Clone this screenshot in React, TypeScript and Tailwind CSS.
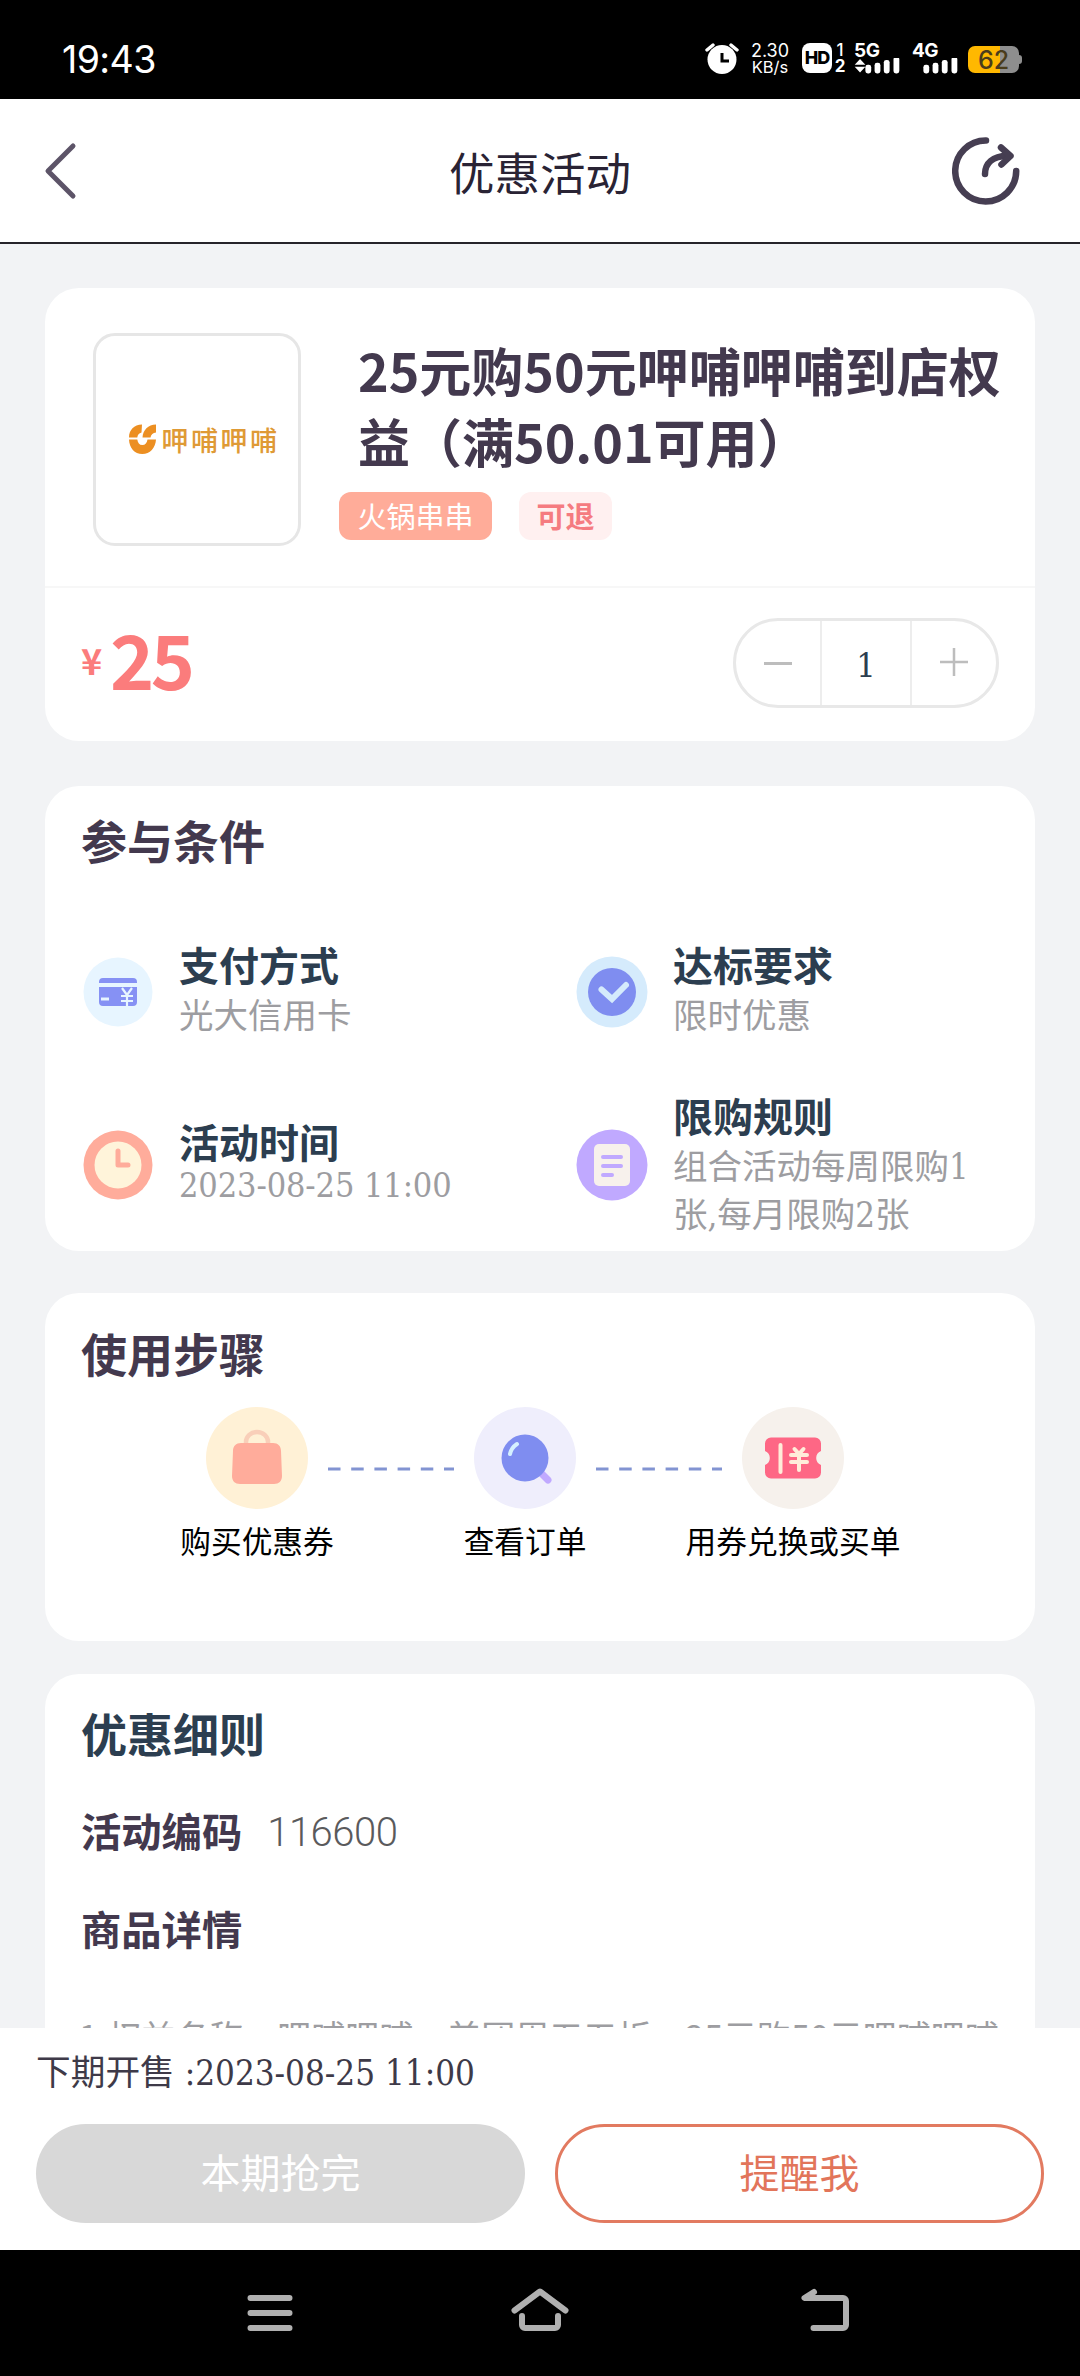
import React from 'react';

const conditions = [
  { id: 1, icon: 'card', title: '支付方式', lines: ['光大信用卡'], textClass: 'pb-[7px]' },
  { id: 2, icon: 'check', title: '达标要求', lines: ['限时优惠'], textClass: 'pb-[7px]' },
  { id: 3, icon: 'clock', title: '活动时间', lines: ['2023-08-25 11:00'], textClass: 'pb-[9px]', compact: true },
  { id: 4, icon: 'rules', title: '限购规则', lines: ['组合活动每周限购1', '张,每月限购2张'], textClass: 'pb-[4px]' },
];

const SERIF = "font-['DejaVu_Serif_Condensed','Noto_Sans_CJK_SC',serif]";

const AlarmIcon = () => (
  <svg width="34" height="32" viewBox="0 0 34 32" fill="none">
    <circle cx="17" cy="16.5" r="14.5" fill="#fff" />
    <path d="M2 7l6-5M32 7l-6-5" stroke="#fff" strokeWidth="3.4" strokeLinecap="round" />
    <path d="M17 10v8h7" stroke="#000" strokeWidth="3" />
  </svg>
);

const Signal = ({ label, arrows }: { label: string; arrows?: boolean }) => (
  <div className="flex h-[32px] w-[47px] flex-col">
    <span className="h-[16px] text-[19px] leading-[15px] font-bold tracking-[-0.5px]">{label}</span>
    <svg width="47" height="17" viewBox="0 0 47 17" fill="#fff">
      {arrows && <path d="M0 7l5.500-6 5.500 6zM0 9h11l-5.500 6z" />}
      <rect x="11" y="7" width="6" height="9" rx="2.500" />
      <rect x="20.500" y="5" width="6" height="11" rx="2.500" />
      <rect x="30" y="2" width="6" height="14" rx="2.500" />
      <rect x="40" y="-1" width="6" height="17" rx="2.500" />
    </svg>
  </div>
);

const StatusBar = () => (
  <div className="flex h-[99px] shrink-0 items-center bg-black pt-[18px] pl-[62px] text-white">
    <span className="w-[643px] pt-[4px] font-['Inter',sans-serif] text-[37.500px] tracking-[-0.6px]">19:43</span>
    <div className="flex h-[32px] items-start font-['Inter',sans-serif]">
      <AlarmIcon />
      <div className="ml-[11px] flex w-[40px] flex-col items-center text-[18px] leading-[16px]">
        <span>2.30</span>
        <span className="text-[16.500px]">KB/s</span>
      </div>
      <div className="ml-[12px] flex h-[30px] w-[30px] items-center justify-center rounded-[8px] bg-white text-[18px] font-extrabold tracking-[-1px] text-black">
        HD
      </div>
      <div className="ml-[2px] flex w-[12px] flex-col text-center text-[17px] leading-[16px] font-bold">
        <span className="leading-[14px] font-medium">1</span>
        <span className="leading-[18px]">2</span>
      </div>
      <div className="ml-[8px]">
        <Signal label="5G" arrows />
      </div>
      <div className="ml-[11px]">
        <Signal label="4G" />
      </div>
      <div className="ml-[9px] flex items-center pt-[3px]">
        <div className="flex h-[27px] w-[51px] items-center justify-center rounded-[7px] bg-linear-to-r from-[#ffb800] from-63% to-[#8e8e8e] to-63%">
          <span className="pt-[3px] text-[25px] leading-none font-medium text-[#4a3c1c]">62</span>
        </div>
        <div className="h-[9px] w-[3px] rounded-r-[3px] bg-[#8e8e8e]" />
      </div>
    </div>
  </div>
);

const Header = () => (
  <div className="flex h-[145px] shrink-0 items-center justify-between border-b-2 border-[#26242a] bg-white pr-[60px] pl-[44px]">
    <svg width="68" height="58" viewBox="0 0 68 58" fill="none">
      <path d="M29 4L4 29l25 25" stroke="#5d5468" strokeWidth="5" strokeLinecap="round" strokeLinejoin="round" />
    </svg>
    <h1 className="pt-px pl-[16px] text-[45.500px] text-[#292334]">优惠活动</h1>
    <svg width="68" height="70" viewBox="0 0 68 70" fill="none" stroke="#463e52" strokeLinecap="round">
      <path d="M34 4.500A30.500 30.500 0 1 0 64.200 35" strokeWidth="6.500" />
      <path d="M33 38C33 27 41 20 55 20" strokeWidth="6.500" />
      <path d="M49 11.500l9.500 8.500-9 8.500" strokeWidth="6.500" strokeLinejoin="round" />
    </svg>
  </div>
);

const BrandLogo = () => (
  <div className="ml-[14px] flex items-center gap-[5px]">
    <svg width="28" height="31" viewBox="0 0 28 31" fill="#ec8f22">
      <path d="M0 13.500C0 6 5 .800 13 .500L12.500 8.500C10 9 8.500 11 8.300 13.500z" />
      <path d="M13.500 13.500C14 6 19 .800 27 .500V8.500C24 9 22 10.500 21.500 13.500z" />
      <path d="M0 15.500h8.300c.500 3.500 2 5.500 5 5.500s4.700-2 5.200-5.500H27C26.500 24 21 30 13.300 30S.300 24 0 15.500z" />
    </svg>
    <span className="font-['Noto_Sans_CJK_SC',sans-serif] text-[27px] leading-none font-medium tracking-[2.500px] text-[#df9a35]">呷哺呷哺</span>
  </div>
);

const Stepper = () => (
  <div className="mb-[3px] flex h-[90px] w-[266px] rounded-full border-3 border-[#e8e8e8]">
    <div className="flex w-[84px] items-center justify-center">
      <div className="h-[3px] w-[28px] bg-[#bdbdbd]" />
    </div>
    <div className="flex flex-1 items-center justify-center border-x-2 border-[#ededed] pt-[4px] font-['DejaVu_Serif_Condensed',serif] text-[34px] text-[#2c3e50]">
      1
    </div>
    <div className="flex w-[84px] items-center justify-center pb-[2px]">
      <svg width="28" height="28" viewBox="0 0 28 28" stroke="#bdbdbd" strokeWidth="2.500">
        <path d="M0 14h28M14 0v28" />
      </svg>
    </div>
  </div>
);

const ProductCard = () => (
  <section className="flex h-[453px] flex-col rounded-[34px] bg-white">
    <div className="flex h-[300px] border-b-2 border-[#f7f7f7] pt-[45px] pl-[48px]">
      <div className="flex h-[213px] w-[208px] shrink-0 items-center justify-center rounded-[22px] border-3 border-[#e6e6e6]">
        <BrandLogo />
      </div>
      <div className="pl-[38px]">
        <h2 className="mt-px w-[670px] pl-[19px] text-[52px] leading-[71px] font-bold text-[#43394e]">
          25元购50元呷哺呷哺到店权
          <br />
          益（满50.01可用）
        </h2>
        <div className="mt-[16px] flex gap-[27px]">
          <span className="flex h-[48px] w-[153px] items-center justify-center rounded-[12px] bg-[#ffac99] text-[29px] text-white">
            火锅串串
          </span>
          <span className="flex h-[48px] w-[93px] items-center justify-center rounded-[12px] bg-[#fff0f0] text-[29px] font-bold text-[#f57b80]">
            可退
          </span>
        </div>
      </div>
    </div>
    <div className="flex flex-1 items-center justify-between pr-[36px] pl-[36px]">
      <div className="flex items-center pb-[14px] text-[#fb7c7c]">
        <span className="w-[29px] pt-[2px] text-[36px] leading-none font-bold">¥</span>
        <span className="text-[75px] leading-none font-bold tracking-[-3.500px]">25</span>
      </div>
      <Stepper />
    </div>
  </section>
);

const ConditionIcon = ({ name }: { name: string }) => {
  if (name === 'card') {
    return (
      <svg width="72" height="72" viewBox="0 0 72 72" fill="none">
        <circle cx="36" cy="36" r="34.500" fill="#e7f5ff" />
        <path d="M17 26a4 4 0 0 1 4-4h30a4 4 0 0 1 4 4v1H17zM17 31h38v15a4 4 0 0 1-4 4H21a4 4 0 0 1-4-4z" fill="#8691f4" />
        <path d="M19 43h8" stroke="#e7f5ff" strokeWidth="3" />
        <path d="M40 32l5 7 5-7M45 39v11M39 40h12M39 45h12" stroke="#e7f5ff" strokeWidth="2.200" />
      </svg>
    );
  }
  if (name === 'check') {
    return (
      <svg width="72" height="72" viewBox="0 0 72 72" fill="none">
        <circle cx="36" cy="36" r="35.500" fill="#d5ebfc" />
        <circle cx="36" cy="36" r="24" fill="#7f8df0" />
        <path d="M25.500 33.500l10.500 9.500 14-14" stroke="#d5ebfc" strokeWidth="6" strokeLinecap="round" />
      </svg>
    );
  }
  if (name === 'clock') {
    return (
      <svg width="72" height="72" viewBox="0 0 72 72" fill="none">
        <circle cx="36" cy="36" r="34.500" fill="#ffac9b" />
        <circle cx="36" cy="36" r="23.500" fill="#fff4da" />
        <path d="M36 22v14h10" stroke="#ffac9b" strokeWidth="5" strokeLinecap="round" strokeLinejoin="round" />
      </svg>
    );
  }
  return (
    <svg width="72" height="72" viewBox="0 0 72 72" fill="none">
      <circle cx="36" cy="36" r="35.500" fill="#c0a9ff" />
      <rect x="18" y="15" width="36" height="42" rx="5" fill="#f7f1ec" />
      <path d="M27 28h18M27 37h18M27 46h9" stroke="#c0a9ff" strokeWidth="4" strokeLinecap="round" />
    </svg>
  );
};

const ConditionsCard = () => (
  <section className="mt-[45px] flex h-[465px] flex-col rounded-[34px] bg-white">
    <h3 className="h-[123px] shrink-0 pt-[22px] pl-[36px] text-[46px] leading-[62px] font-bold text-[#43394e]">参与条件</h3>
    <div className="grid grid-cols-[494px_496px] grid-rows-[165px_182px]">
      {conditions.map((item) => (
        <div key={item.id} className="flex items-center pl-[37px]">
          <ConditionIcon name={item.icon} />
          <div className={`ml-[25px] ${item.textClass}`}>
            <p className={`text-[40px] font-bold text-[#2c3e50] ${item.compact ? 'leading-[50px]' : 'leading-[56px]'}`}>
              {item.title}
            </p>
            {item.lines.map((line) => (
              <p
                key={line}
                className={`${SERIF} text-[#9d9da1] ${
                  item.compact ? 'text-[34px] leading-[39px] tracking-[-0.1px]' : 'text-[34.500px] leading-[48px]'
                }`}
              >
                {line}
              </p>
            ))}
          </div>
        </div>
      ))}
    </div>
  </section>
);

const StepIcon = ({ name }: { name: string }) => {
  if (name === 'bag') {
    return (
      <svg width="102" height="102" viewBox="0 0 102 102" fill="none">
        <circle cx="51" cy="51" r="51" fill="#fff1d6" />
        <path d="M40 38v-3a11 10 0 0 1 22 0v3" stroke="#f9cfb9" strokeWidth="4.500" />
        <path d="M35 36h32c5 0 8 3 8 8l1 25c0 5-3 8-8 8H34c-5 0-8-3-8-8l1-25c0-5 3-8 8-8z" fill="#ffac9b" />
      </svg>
    );
  }
  if (name === 'search') {
    return (
      <svg width="102" height="102" viewBox="0 0 102 102" fill="none">
        <circle cx="51" cy="51" r="51" fill="#efeefc" />
        <path d="M66 65l8 8" stroke="#c0a9ff" strokeWidth="7" strokeLinecap="round" />
        <circle cx="51" cy="51" r="23.500" fill="#7f8df0" />
        <path d="M36 47c1-5 4-8 7-10" stroke="#d5f0ff" strokeWidth="4" strokeLinecap="round" />
      </svg>
    );
  }
  return (
    <svg width="102" height="102" viewBox="0 0 102 102" fill="none">
      <circle cx="51" cy="51" r="51" fill="#f6f1ec" />
      <path d="M29 30.500h44a6 6 0 0 1 6 6v7.500a7.500 7.500 0 0 0 0 14v7.500a6 6 0 0 1-6 6H29a6 6 0 0 1-6-6v-7.500a7.500 7.500 0 0 0 0-14v-7.500a6 6 0 0 1 6-6z" fill="#fe6785" />
      <path d="M38.500 38v27" stroke="#ffedda" strokeWidth="4" strokeLinecap="round" />
      <path d="M52.500 42l4.500 5 4.500-5M49 48h16M49 55h16M57 47v16" stroke="#ffedda" strokeWidth="4" strokeLinecap="round" />
    </svg>
  );
};

const Dashes = () => (
  <svg className="mt-[60px] shrink-0" width="126" height="4" viewBox="0 0 126 4">
    <path d="M0 2h126" stroke="#8294d2" strokeWidth="3" strokeDasharray="12.500 10.700" />
  </svg>
);

const Step = ({ icon, label }: { icon: string; label: string }) => (
  <div className="flex w-[102px] shrink-0 flex-col items-center">
    <StepIcon name={icon} />
    <span className="mt-[9px] text-[30.700px] leading-[44px] whitespace-nowrap text-black">{label}</span>
  </div>
);

const StepsCard = () => (
  <section className="mt-[42px] flex h-[348px] flex-col rounded-[34px] bg-white">
    <h3 className="h-[114px] shrink-0 pt-[28px] pl-[36px] text-[46px] leading-[62px] font-bold text-[#43394e]">使用步骤</h3>
    <div className="flex items-start gap-[20px] pl-[161px]">
      <Step icon="bag" label="购买优惠券" />
      <Dashes />
      <Step icon="search" label="查看订单" />
      <Dashes />
      <Step icon="coupon" label="用券兑换或买单" />
    </div>
  </section>
);

const DetailsCard = () => (
  <section className="mt-[33px] rounded-t-[34px] bg-white pl-[36px]">
    <h3 className="pt-[27px] text-[46px] leading-[62px] font-bold text-[#2c3e50]">优惠细则</h3>
    <div className="mt-[37px] flex h-[60px] items-center">
      <span className="text-[40.300px] leading-[60px] font-bold text-[#43394e]">活动编码</span>
      <span className="ml-[25px] pt-[5px] font-['Roboto',sans-serif] text-[40px] font-light tracking-[-0.500px] text-[#5a5a5c]">116600</span>
    </div>
    <p className="mt-[38px] text-[40.300px] leading-[60px] font-bold text-[#43394e]">商品详情</p>
    <p className="-ml-[2px] mt-[53px] text-[34px] leading-[50px] whitespace-nowrap text-[#9d9da1]">
      1.权益名称：呷哺呷哺，美团周五五折，25元购50元呷哺呷哺
    </p>
  </section>
);

const BottomBar = () => (
  <div className="h-[222px] shrink-0 bg-white px-[36px]">
    <p className={`${SERIF} h-[96px] pt-[19px] text-[34.700px] leading-[52px] text-[#3e3a48]`}>下期开售 :2023-08-25 11:00</p>
    <div className="flex gap-[30px]">
      <button className="h-[99px] w-[489px] rounded-full bg-[#d8d8d8] pb-[5px] text-[40px] text-white">本期抢完</button>
      <button className="h-[99px] w-[489px] rounded-full border-3 border-[#e27a60] pb-[5px] text-[40px] text-[#e2755a]">提醒我</button>
    </div>
  </div>
);

const NavBar = () => (
  <div className="flex h-[126px] shrink-0 items-start bg-black pt-[36px] pl-[246px]">
    <svg width="48" height="48" viewBox="0 0 48 48" stroke="#b0b0b0" strokeWidth="6" strokeLinecap="round">
      <path d="M4.500 12h39M4.500 27h39M4.500 42h39" />
    </svg>
    <svg className="ml-[216px]" width="60" height="48" viewBox="0 0 60 48" fill="none" stroke="#b0b0b0" strokeWidth="6" strokeLinecap="round" strokeLinejoin="round">
      <path d="M4.500 24.500L30 5.500l25.500 19" />
      <path d="M12 30v9a3 3 0 0 0 3 3h30a3 3 0 0 0 3-3v-9" />
    </svg>
    <svg className="ml-[231px]" width="52" height="48" viewBox="0 0 52 48" fill="none" stroke="#b0b0b0" strokeWidth="6" strokeLinecap="round" strokeLinejoin="round">
      <path d="M13 6L3.500 12H42a3 3 0 0 1 3 3v24a3 3 0 0 1-3 3H12.500" />
    </svg>
  </div>
);

const App = () => {
  return (
    <div className="flex h-[2376px] w-[1080px] flex-col overflow-hidden bg-[#f2f3f5] font-['Noto_Sans_CJK_SC',sans-serif]">
      <StatusBar />
      <Header />
      <main className="min-h-0 flex-1 overflow-hidden px-[45px] pt-[44px]">
        <ProductCard />
        <ConditionsCard />
        <StepsCard />
        <DetailsCard />
      </main>
      <BottomBar />
      <NavBar />
    </div>
  );
};

export default App;
